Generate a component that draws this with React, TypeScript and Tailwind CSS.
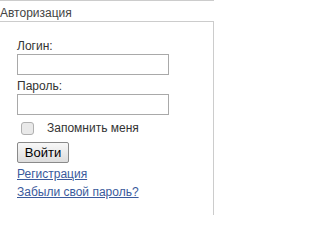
export default function App() {
  return (
    <div className="w-[230px] h-[250px] bg-white font-['Liberation_Sans',Arial,sans-serif] text-[12px] overflow-hidden">
      <div className="w-[214px] border-t border-[#cccccc]" />
      <div className="h-[20px] pt-[5px] leading-[14px] text-[#444444]">Авторизация</div>
      <div className="w-[214px] h-[194px] border-t border-r border-[#cccccc] pl-[17px] pt-[16px]">
        <div className="leading-[16px] text-[#333333]">Логин:</div>
        <input type="text" className="block w-[152px] h-[21px] border border-[#a9a9a9] bg-white outline-none" />
        <div className="mt-[3px] leading-[16px] text-[#333333]">Пароль:</div>
        <input type="password" className="block w-[152px] h-[21px] border border-[#a9a9a9] bg-white outline-none" />
        <label className="mt-[3px] h-[20px] flex items-center gap-[13px] text-[#333333]">
          <span className="ml-[4px] w-[13px] h-[13px] rounded-[3px] border border-[#b0b0b0] bg-[#e9e9e9]" />
          <span>Запомнить меня</span>
        </label>
        <button className="mt-[4px] block w-[52px] h-[21px] border border-[#8a8a8a] rounded-[2px] bg-gradient-to-b from-[#f8f8f8] to-[#dddddd] text-[13px] leading-[17px] text-black">
          Войти
        </button>
        <a href="#" className="mt-[4px] block w-fit leading-[14px] text-[#3a5a9c] underline">Регистрация</a>
        <a href="#" className="mt-[4px] block w-fit leading-[14px] text-[#3a5a9c] underline">Забыли свой пароль?</a>
      </div>
    </div>
  );
}
